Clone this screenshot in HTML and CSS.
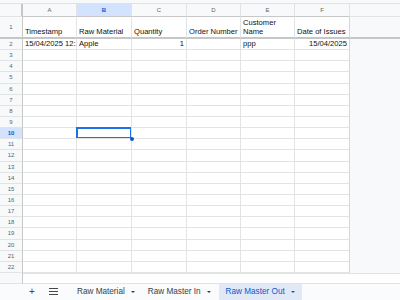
FILE: index.html
```html
<!DOCTYPE html>
<html lang="en">
<head>
    <meta charset="UTF-8">
    <title>Raw Master Out</title>
    <link rel="stylesheet" href="styles.css">
</head>
<body>
    <div class="topstrip"></div>
    <div class="sheet">
        <div class="row head">
            <div class="rh corner"></div>
            <div class="ch">A</div>
            <div class="ch active">B</div>
            <div class="ch">C</div>
            <div class="ch">D</div>
            <div class="ch">E</div>
            <div class="ch">F</div>
            <div class="fill"></div>
        </div>
        <div class="row titles">
            <div class="rh">1</div>
            <div class="c">Timestamp</div>
            <div class="c">Raw Material</div>
            <div class="c">Quantity</div>
            <div class="c">Order Number</div>
            <div class="c">Customer Name</div>
            <div class="c">Date of Issues</div>
            <div class="fill"></div>
        </div>
        <div class="js-rows"></div>
        <div class="row scroll">
            <div class="rh"></div>
            <div class="scroll-track"></div>
        </div>
    </div>
    <nav class="tabs">
        <span class="tab-icon">+</span>
        <span class="tab-icon menu">
            <svg width="9" height="7" viewBox="0 0 9 7"><path d="M0 .5h9M0 3.5h9M0 6.5h9" stroke="#444746" stroke-width="1"/></svg>
        </span>
        <span class="tab">Raw Material <i class="caret"></i></span>
        <span class="tab">Raw Master In <i class="caret"></i></span>
        <span class="tab current">Raw Master Out <i class="caret"></i></span>
    </nav>
    <script>
        const data = {
            2: ['15/04/2025 12:28:', 'Apple', '1', '', 'ppp', '15/04/2025']
        };
        const numeric = [false, false, true, false, false, true];
        let html = '';
        for (let r = 2; r <= 22; r++) {
            const cells = data[r] || ['', '', '', '', '', ''];
            html += '<div class="row' + (r === 10 ? ' sel-row' : '') + '">';
            html += '<div class="rh">' + r + '</div>';
            for (let c = 0; c < 6; c++) {
                let cls = 'c';
                if (numeric[c]) cls += ' num';
                if (r === 10 && c === 1) cls += ' selected';
                html += '<div class="' + cls + '">' + cells[c] + '</div>';
            }
            html += '<div class="fill"></div></div>';
        }
        document.querySelector('.js-rows').innerHTML = html;
    </script>
</body>
</html>
```

FILE: styles.css
```css
body {
    margin: 0;
    width: 400px;
    height: 300px;
    overflow: hidden;
    background: #fff;
    font-family: "Liberation Sans", Arial, sans-serif;
    color: #111;
}

.topstrip {
    height: 4px;
    background: #f8f9fa;
    border-bottom: 1px solid #e1e3e1;
    box-sizing: border-box;
}

.row {
    display: grid;
    grid-template-columns: 23px 54px 55px 55px 54px 54px 55px 1fr;
    height: 11.15px;
}

.row > div {
    border-right: 1px solid #e2e3e3;
    border-bottom: 1px solid #e2e3e3;
    box-sizing: border-box;
    overflow: hidden;
    white-space: nowrap;
}

.rh {
    background: #f8f9fa;
    color: #5f6368;
    font-size: 6px;
    text-align: center;
    line-height: 10px;
    border-right-color: #c7c7c7 !important;
}

.head {
    height: 13px;
}

.head .corner {
    border-right: 2px solid #c4c7c5 !important;
}

.ch {
    background: #f8f9fa;
    color: #5f6368;
    font-size: 6px;
    text-align: center;
    line-height: 12px;
    border-bottom-color: #c7c7c7 !important;
}

.ch.active {
    background: #d3e3fd;
    color: #0b57d0;
    font-weight: bold;
}

.fill {
    background: #f8f9fa;
    border-right: none !important;
    border-bottom: none !important;
}

.head .fill {
    border-bottom: 1px solid #e2e3e3 !important;
}

.row > .c:nth-child(7) {
    border-right-color: #d5d7d5;
}

.c {
    font-size: 7.6px;
    line-height: 10px;
    padding: 0 2px;
}

.num {
    text-align: right;
}

.titles {
    height: 22px;
}

.titles > div {
    border-bottom: 2px solid #c4c7c5 !important;
}

.titles .c {
    display: flex;
    align-items: flex-end;
    white-space: normal;
    line-height: 9px;
    padding-bottom: 1px;
}

.titles .rh {
    line-height: 20px;
}

.sel-row .rh {
    background: #d3e3fd;
    color: #0b57d0;
    font-weight: bold;
}

.row > .selected {
    position: relative;
    overflow: visible;
    box-shadow: inset 0 0 0 1px #1a73e8, -1px -1px 0 0 #1a73e8;
}

.selected::after {
    content: "";
    position: absolute;
    right: -2.5px;
    bottom: -2.5px;
    width: 4px;
    height: 4px;
    border-radius: 50%;
    background: #0b57d0;
}

.scroll {
    display: grid;
    grid-template-columns: 23px 1fr;
    height: 11px;
}

.scroll-track {
    background: #fff;
    border-right: none !important;
    border-top: 1px solid #e2e3e3;
}

.tabs {
    display: flex;
    align-items: center;
    height: 16px;
    background: #f9fbfd;
    font-size: 8.2px;
    color: #444746;
    padding-left: 26px;
}

.tab-icon {
    width: 12px;
    text-align: center;
    font-size: 10px;
    margin-right: 9px;
}

.tab-icon.menu {
    display: flex;
    justify-content: center;
    margin-right: 11px;
}

.tab {
    display: flex;
    align-items: center;
    height: 16px;
    padding: 0 6px 0 7px;
    color: #3c4043;
}

.tab.current {
    background: #e1e9f7;
    color: #0b57d0;
    margin-left: 2px;
    padding-right: 7px;
}

.caret {
    display: inline-block;
    margin-left: 6px;
    border-left: 2.5px solid transparent;
    border-right: 2.5px solid transparent;
    border-top: 2.5px solid currentColor;
}
```
